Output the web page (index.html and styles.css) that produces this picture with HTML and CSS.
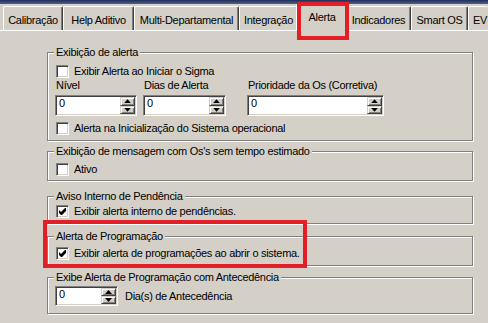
FILE: index.html
```
<!DOCTYPE html>
<html lang="pt-BR">
<head>
  <meta charset="UTF-8">
  <meta name="viewport" content="width=device-width, initial-scale=1.0">
  <title>Configurações - Alerta</title>
  <link rel="stylesheet" href="styles.css">
</head>
<body>

  <div class="titlebar"></div>

  <div class="tabs">
    <div class="tab tab-calib">Calibração</div>
    <div class="tab tab-help">Help Aditivo</div>
    <div class="tab tab-multi">Multi-Departamental</div>
    <div class="tab tab-integ">Integração</div>
    <div class="tab tab-active">Alerta</div>
    <div class="tab tab-ind">Indicadores</div>
    <div class="tab tab-smart">Smart OS</div>
    <div class="tab tab-ev">EV</div>
  </div>

  <div class="panel">

    <div class="group group-alert">
      <div class="group-title">Exibição de alerta</div>
      <label class="check check-first"><span class="box"></span>Exibir Alerta ao Iniciar o Sigma</label>
      <div class="fields">
        <div class="field field-nivel">
          <span class="field-label">Nível</span>
          <div class="spin">
            <span class="spin-value">0</span>
            <span class="spin-buttons"><span class="spin-btn spin-up"></span><span class="spin-btn spin-down"></span></span>
          </div>
        </div>
        <div class="field field-dias">
          <span class="field-label">Dias de Alerta</span>
          <div class="spin">
            <span class="spin-value">0</span>
            <span class="spin-buttons"><span class="spin-btn spin-up"></span><span class="spin-btn spin-down"></span></span>
          </div>
        </div>
        <div class="field field-prio">
          <span class="field-label">Prioridade da Os (Corretiva)</span>
          <div class="spin">
            <span class="spin-value">0</span>
            <span class="spin-buttons"><span class="spin-btn spin-up"></span><span class="spin-btn spin-down"></span></span>
          </div>
        </div>
      </div>
      <label class="check check-last"><span class="box"></span>Alerta na Inicialização do Sistema operacional</label>
    </div>

    <div class="group group-msg">
      <div class="group-title">Exibição de mensagem com Os's sem tempo estimado</div>
      <label class="check"><span class="box"></span>Ativo</label>
    </div>

    <div class="group group-pend">
      <div class="group-title">Aviso Interno de Pendência</div>
      <label class="check"><span class="box"><svg width="7" height="7" viewBox="0 0 7 7"><path d="M0 2 L2 4 L6 0 L7 0 L7 3 L3 7 L2 7 L0 5 Z"/></svg></span>Exibir alerta interno de pendências.</label>
    </div>

    <div class="group group-prog">
      <div class="group-title">Alerta de Programação</div>
      <label class="check"><span class="box"><svg width="7" height="7" viewBox="0 0 7 7"><path d="M0 2 L2 4 L6 0 L7 0 L7 3 L3 7 L2 7 L0 5 Z"/></svg></span>Exibir alerta de programações ao abrir o sistema.</label>
    </div>

    <div class="group group-ante">
      <div class="group-title">Exibe Alerta de Programação com Antecedência</div>
      <div class="row">
        <div class="spin spin-days">
          <span class="spin-value">0</span>
          <span class="spin-buttons"><span class="spin-btn spin-up"></span><span class="spin-btn spin-down"></span></span>
        </div>
        <span class="row-label">Dia(s) de Antecedência</span>
      </div>
    </div>

  </div>

</body>
</html>
```

FILE: styles.css
```
*, *:before, *:after {
  box-sizing: border-box;
}
body {
  margin: 0;
  height: 323px;
  overflow: hidden;
  background: #d4d0c8;
  color: #000;
  font-family: "Liberation Sans", Arial, sans-serif;
  font-size: 11px;
  letter-spacing: -0.3px;
}

.titlebar {
  height: 4px;
  background: linear-gradient(to bottom, #1f2f5c, #4e6089);
}

/* tabs */
.tabs {
  display: flex;
  align-items: flex-end;
  height: 26px;
  padding-left: 3px;
}
.tab {
  flex-shrink: 0;
  height: 24px;
  padding-top: 7px;
  line-height: 13px;
  text-align: center;
  white-space: nowrap;
  border-top: 1px solid #fff;
  border-left: 1px solid #fff;
  border-right: 1px solid #404040;
  border-radius: 2px 2px 0 0;
  box-shadow: inset -1px 0 #808080;
}
.tab-calib { width: 60px; }
.tab-help { width: 71px; }
.tab-multi { width: 105px; }
.tab-integ { width: 59px; }
.tab-ind { width: 65px; }
.tab-smart { width: 57px; }
.tab-ev {
  width: 20px;
  padding-left: 4px;
  text-align: left;
  border-right: none;
  box-shadow: none;
}

.tab-active {
  position: relative;
  z-index: 1;
  width: 52px;
  height: 27px;
  margin: 0 -2px -1px;
  padding-top: 6px;
  background: #d4d0c8;
}
.tab-active:after {
  content: "";
  position: absolute;
  left: 0;
  top: -3px;
  width: 52px;
  height: 38px;
  border: 4px solid #e21f26;
}

.panel {
  border-top: 1px solid #fff;
  padding: 21px 0 0 47px;
}

/* group boxes */
.group {
  position: relative;
  width: 426px;
  border: 1px solid #808080;
  box-shadow: 1px 1px #fff, inset 1px 1px #fff;
  padding: 0 0 5px 8px;
}
.group-title {
  width: fit-content;
  margin: -7px 0 0 -2px;
  padding: 0 2px;
  line-height: 13px;
  background: #d4d0c8;
}
.group-msg {
  margin-top: 10px;
  padding-bottom: 4px;
}
.group-pend {
  margin-top: 15px;
}
.group-prog {
  margin-top: 12px;
}
.group-ante {
  margin-top: 11px;
  padding-bottom: 7px;
}
.group-prog:after {
  content: "";
  position: absolute;
  left: -5px;
  top: -17px;
  width: 264px;
  height: 48px;
  border: 4px solid #e21f26;
}

/* checkboxes */
.check {
  display: flex;
  align-items: center;
  height: 13px;
  line-height: 13px;
  margin-top: 5px;
}
.group-alert .check-first { margin-top: 6px; }
.group-alert .check-last { margin-top: 6px; }
.group-pend .check { margin-top: 2px; }
.group-prog .check { margin-top: 4px; }

.box {
  flex-shrink: 0;
  display: flex;
  align-items: center;
  justify-content: center;
  width: 13px;
  height: 13px;
  margin-right: 5px;
  background: #fff;
  border: 1px solid;
  border-color: #808080 #fff #fff #808080;
  box-shadow: inset 1px 1px #404040, inset -1px -1px #d4d0c8;
}

/* spin edits */
.fields {
  display: flex;
  margin: 1px 0 0 -1px;
}
.field {
  display: flex;
  flex-direction: column;
}
.field-label {
  padding-left: 1px;
  line-height: 13px;
}
.field-nivel { width: 82px; margin-right: 6px; }
.field-dias { width: 83px; margin-right: 21px; }
.field-prio { width: 137px; }

.spin {
  display: flex;
  height: 21px;
  margin-top: 3px;
  padding: 1px;
  background: #fff;
  border: 1px solid;
  border-color: #808080 #fff #fff #808080;
  box-shadow: inset 1px 1px #404040, inset -1px -1px #d4d0c8;
}
.spin-value {
  flex: 1;
  padding-left: 2px;
  line-height: 12px;
}
.spin-buttons {
  display: flex;
  flex-direction: column;
  width: 15px;
}
.spin-btn {
  flex: 1;
  display: flex;
  align-items: center;
  justify-content: center;
  background: #d4d0c8;
  border: 1px solid;
  border-color: #d4d0c8 #404040 #404040 #d4d0c8;
  box-shadow: inset 1px 1px #fff, inset -1px -1px #808080;
}
.spin-btn:after {
  content: "";
  width: 7px;
  height: 4px;
  background: #000;
}
.spin-up:after {
  clip-path: polygon(50% 0, 100% 100%, 0 100%);
}
.spin-down:after {
  clip-path: polygon(0 0, 100% 0, 50% 100%);
}

.row {
  display: flex;
  align-items: center;
  margin: 2px 0 0 -1px;
}
.spin-days {
  width: 63px;
  height: 20px;
  margin-top: 0;
}
.row-label {
  margin-left: 7px;
  line-height: 13px;
}
```
